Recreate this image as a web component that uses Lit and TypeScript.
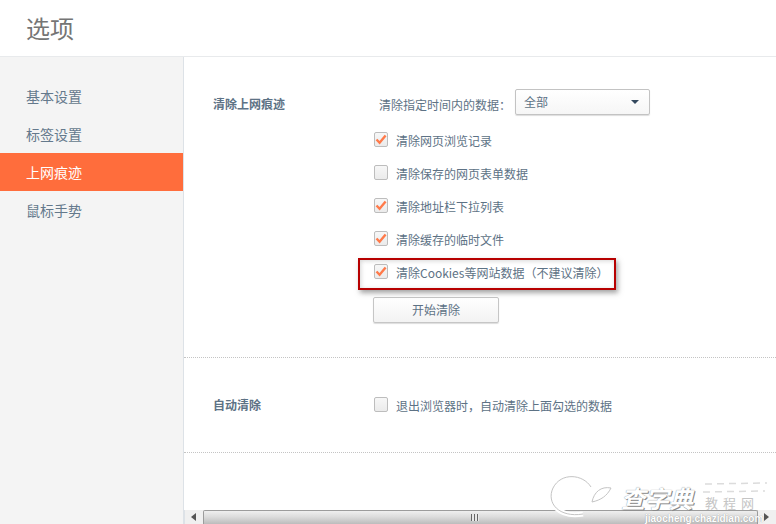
import { LitElement, html, css, svg } from "lit";
import { customElement } from "lit/decorators.js";

const font = css`"Noto Sans CJK SC", "Liberation Sans", sans-serif`;

@customElement("app-root")
export class AppRoot extends LitElement {
  static styles = css`
    :host { display: block; width: 776px; height: 524px; overflow: hidden; position: relative; background: #fff; font-family: ${font}; color: #5d7285; font-size: 12px; }
    * { box-sizing: border-box; }
    .head { height: 57px; border-bottom: 1px solid #e8eaec; padding: 10px 0 0 26px; font-size: 24px; line-height: 36px; color: #757575; }
    .body { display: flex; height: 467px; }
    .side { width: 184px; background: #f4f4f4; border-right: 1px solid #dde2e7; padding-top: 20px; flex: none; }
    .nav { height: 38px; line-height: 38px; padding-left: 26px; font-size: 14px; color: #64798c; }
    .nav.on { background: #ff6d3c; color: #fff; width: 183px; }
    .main { flex: 1; display: flex; flex-direction: column; position: relative; min-width: 0; }
    .sec { display: flex; border-bottom: 1px dotted #c4c4c4; padding-left: 29px; }
    .sec.a { height: 301px; padding-top: 32px; }
    .sec.b { height: 95px; padding-top: 32px; }
    .label { width: 161px; flex: none; font-weight: 700; font-size: 12px; line-height: 20px; color: #5d7285; }
    .sec.a .label { padding-top: 5px; }
    .sec.b .label { padding-top: 5px; }
    .col { display: flex; flex-direction: column; }
    .range { display: flex; align-items: center; height: 26px; margin-bottom: 10px; padding-left: 5px; }
    .range span.t { width: 136px; white-space: nowrap; padding-top: 4px; }
    .select { width: 135px; height: 26px; border: 1px solid #c3c3c3; border-radius: 2px; background: linear-gradient(#fff, #f6f6f6); box-shadow: 0 1px 1px #ddd; display: flex; align-items: center; justify-content: space-between; padding: 0 10px 2px 8px; color: #5d7285; }
    .select i { width: 0; height: 0; border-left: 4px solid transparent; border-right: 4px solid transparent; border-top: 4px solid #34495e; margin-top: 2px; }
    .row { display: flex; align-items: center; gap: 8px; height: 33px; white-space: nowrap; }
    .row span.t2 { margin-top: -2px; }
    .box { width: 14px; height: 15px; border: 1px solid #bdbdbd; border-radius: 2px; background: linear-gradient(#f7f7f7, #ebebeb); flex: none; display: flex; align-items: center; justify-content: center; margin-top: -4px; }
    .box svg { width: 12px; height: 11px; display: block; }
    .btn { width: 126px; height: 26px; margin-top: 7px; margin-left: -1px; border: 1px solid #c6c6c6; border-radius: 2px; background: linear-gradient(#fff, #f3f3f3); box-shadow: 0 1px 1px #ddd; text-align: center; line-height: 24px; color: #5d7285; }
    .mark { position: absolute; left: 358px; top: 258px; width: 258px; height: 32px; border: 2px solid #b70000; box-shadow: 2px 3px 5px rgba(90,90,90,.55), inset 1px 1px 4px rgba(90,90,90,.25); pointer-events: none; }
    .bar { position: absolute; left: 184px; right: 0; bottom: 0; height: 14px; background: #f0f0f0; display: flex; border-left: 1px solid #dde2e7; }
    .arrow { width: 18px; display: flex; align-items: center; justify-content: center; color: #555; flex: none; }
    .thumb { flex: 1; border: 1px solid #9c9c9c; border-bottom: none; border-radius: 2px 2px 0 0; background: linear-gradient(#efefef, #dcdcdc 45%, #bcbcbc); display: flex; align-items: center; justify-content: center; }
    .grip { width: 8px; height: 7px; background: repeating-linear-gradient(90deg, #666 0 1px, #e8e8e8 1px 3px); margin-right: 12px; }
    .wm { position: absolute; left: 545px; top: 470px; width: 231px; height: 54px; pointer-events: none; overflow: hidden; }
    .wm svg { position: absolute; left: 0; top: 0; }
    .wm .big { position: absolute; left: 76px; top: 15px; font-size: 24px; font-weight: 700; font-style: italic; line-height: 25px; color: #fff; text-shadow: 1px 1px 0 #8a8a8a, 0 0 1px #777; white-space: nowrap; }
    .wm .cn { position: absolute; left: 160px; top: 26px; font-size: 13px; line-height: 14px; letter-spacing: 5px; color: #c5c5c5; white-space: nowrap; }
    .wm .url { position: absolute; left: 100px; top: 43px; font: 700 10px/11px "Liberation Sans", sans-serif; color: #fff; text-shadow: 0 0 1px #888; white-space: nowrap; }
  `;

  private check(on: boolean) {
    return html`<span class="box">${on
      ? svg`<svg viewBox="0 0 12 11"><path d="M1.5 5.5 L4.6 8.8 L10.6 1.6" fill="none" stroke="#ff7a4a" stroke-width="2.4"/></svg>`
      : ""}</span>`;
  }

  render() {
    const rows: [boolean, string][] = [
      [true, "清除网页浏览记录"],
      [false, "清除保存的网页表单数据"],
      [true, "清除地址栏下拉列表"],
      [true, "清除缓存的临时文件"],
      [true, "清除Cookies等网站数据（不建议清除）"],
    ];
    return html`
      <div class="head">选项</div>
      <div class="body">
        <div class="side">
          <div class="nav">基本设置</div>
          <div class="nav">标签设置</div>
          <div class="nav on">上网痕迹</div>
          <div class="nav">鼠标手势</div>
        </div>
        <div class="main">
          <div class="sec a">
            <div class="label">清除上网痕迹</div>
            <div class="col">
              <div class="range"><span class="t">清除指定时间内的数据：</span><div class="select"><span>全部</span><i></i></div></div>
              ${rows.map(([on, t]) => html`<div class="row">${this.check(on)}<span class="t2">${t}</span></div>`)}
              <div class="btn">开始清除</div>
            </div>
          </div>
          <div class="sec b">
            <div class="label">自动清除</div>
            <div class="col"><div class="row">${this.check(false)}<span class="t2">退出浏览器时，自动清除上面勾选的数据</span></div></div>
          </div>
        </div>
      </div>
      <div class="mark"></div>
      <div class="bar">
        <div class="arrow"><svg width="6" height="8"><path d="M5 0V8L0 4Z" fill="#555"/></svg></div>
        <div class="thumb"><div class="grip"></div></div>
        <div class="arrow"><svg width="6" height="8"><path d="M0 0V8L5 4Z" fill="#555"/></svg></div>
      </div>
      <div class="wm">
        <svg width="231" height="54" viewBox="0 0 231 54">
          <path d="M46 17 C38 4 16 2 8 18 C1 33 14 48 38 44" fill="none" stroke="#fff" stroke-width="5"/>
          <path d="M46 17 C38 4 16 2 8 18 C1 33 14 48 38 44" fill="none" stroke="#c4c4c4" stroke-width="1"/>
          <path d="M47 32 C49 22 56 16 66 18 C62 26 56 30 47 32" fill="#fff" stroke="#c4c4c4" stroke-width="1"/>
          <path d="M160 14 L222 13 M158 22 L220 21" stroke="#dcdcdc" stroke-width="1.5" stroke-dasharray="7 5"/>
        </svg>
        <span class="big">查字典</span>
        <span class="cn">教程网</span>
        <span class="url">jiaocheng.chazidian.com</span>
      </div>
    `;
  }
}
